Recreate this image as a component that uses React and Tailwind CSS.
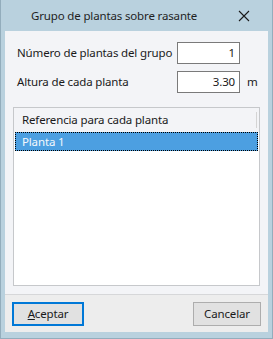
export default function App() {
    const font = { fontFamily: '"Noto Sans", "Open Sans", sans-serif' };
    return (
        <div style={font} className="w-[273px] h-[339px] flex flex-col bg-[#b9d1de] border-l border-r border-b border-[#93adbc] text-[11.5px] tracking-[-0.15px] text-[#1a1a1a] leading-none whitespace-nowrap">
            <div className="h-[31px] flex items-center shrink-0">
                <span className="ml-[30px] text-[#1f1f1f]">Grupo de plantas sobre rasante</span>
                <svg className="ml-auto mr-[22px]" width="12" height="12" viewBox="0 0 12 12">
                    <path d="M1 1 L11 11 M11 1 L1 11" stroke="#1a1a1a" strokeWidth="1.1" fill="none" />
                </svg>
            </div>
            <div className="mx-[4px] mb-[6px] flex-1 flex flex-col bg-[#f3f4f7]">
                <div className="pt-[11px] pl-[12px] flex flex-col gap-[7px]">
                    <div className="flex items-center">
                        <span className="w-[160px]">Número de plantas del grupo</span>
                        <div className="w-[63px] h-[22px] border border-[#7a7a7a] bg-white flex items-center justify-end pr-[4px]">1</div>
                    </div>
                    <div className="flex items-center">
                        <span className="w-[160px]">Altura de cada planta</span>
                        <div className="w-[63px] h-[22px] border border-[#7a7a7a] bg-white flex items-center justify-end pr-[4px]">3.30</div>
                        <span className="ml-[7px]">m</span>
                    </div>
                </div>
                <div className="mt-[14px] mx-[8px] h-[179px] border border-[#c6c8cb] bg-white flex flex-col">
                    <div className="h-[24px] bg-[#f3f4f7] flex items-center pl-[8px] relative">
                        <span>Referencia para cada planta</span>
                        <div className="absolute right-[2px] top-[4px] w-px h-[16px] bg-[#d4d4d4]" />
                    </div>
                    <div className="mx-px h-[19px] bg-[#4c9fe1] border border-dotted border-black flex items-center pl-[6px] text-[#f4f8fc]">
                        Planta 1
                    </div>
                </div>
                <div className="mt-auto h-[38px] border-t border-[#d6d7d9] bg-[#ededed] flex items-start justify-between px-[7px] pt-[7px]">
                    <button className="w-[72px] h-[24px] border-2 border-[#0078d7] bg-[#e1e1e1] flex items-center justify-center">
                        <span><span className="underline">A</span>ceptar</span>
                    </button>
                    <button className="w-[68px] h-[24px] border border-[#adadad] bg-[#e1e1e1] flex items-center justify-center">
                        Cancelar
                    </button>
                </div>
            </div>
        </div>
    );
}
